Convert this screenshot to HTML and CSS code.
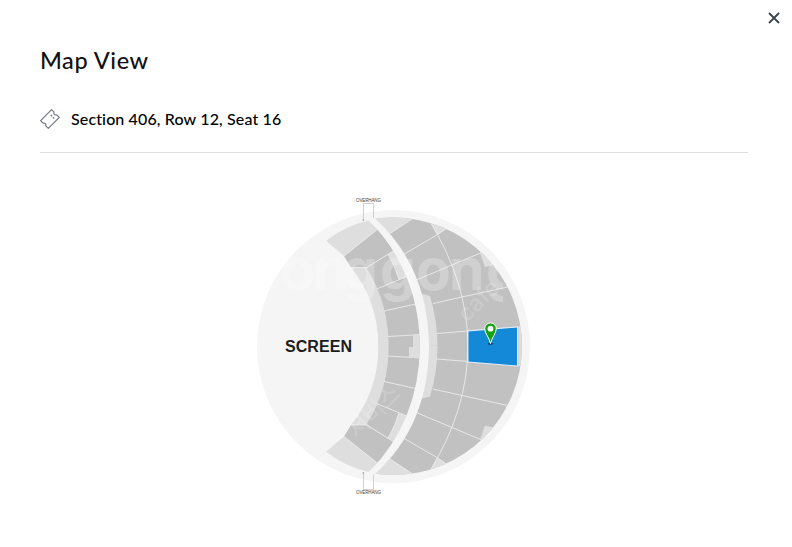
FILE: index.html
```html
<!DOCTYPE html>
<html lang="en">
<head>
  <meta charset="UTF-8">
  <title>Map View</title>
  <link rel="stylesheet" href="styles.css">
</head>
<body>

<div class="modal">
  <button class="close" aria-label="Close">
    <svg width="12" height="12" viewBox="0 0 12 12"><path d="M1 1l10 10M11 1L1 11"/></svg>
  </button>

  <h1>Map View</h1>

  <div class="seat-info">
    <svg class="ticket" width="20" height="20" viewBox="0 0 20 20">
      <path d="M11.500.7L14 3.200c-.7 1.700.9 3.300 2.600 2.600L19.300 8.300 8.300 19.300 5.700 16.800c.8-1.700-.9-3.400-2.600-2.600L.7 11.600z"/>
      <path d="M10.700 5.900l1.400 1.400M12.900 8.100l1.400 1.400"/>
    </svg>
    <span>Section 406, Row 12, Seat 16</span>
  </div>

  <div class="map">
    <svg width="290" height="310" viewBox="250 190 290 310">
      <defs>
        <clipPath id="bowl"><circle cx="393" cy="346.500" r="129"/></clipPath>
        <clipPath id="arena"><path d="M257 200H503V340L540 300V500H257z"/></clipPath>

        <!-- upper half of the seating, mirrored for the lower half -->
        <g id="half">
          <path class="light" d="M326 240.700Q345 226 368.500 220.500L380 231 344 256z"/>
          <path class="dark" d="M344 256L376.700 230 387 233 396 250 366.700 268.300 351 267.500z"/>
          <path class="light" d="M351 267.500H366.700Q388.500 303 388.500 347H378.300Q378.500 301 351 267.500z"/>
          <path class="dark" d="M366.700 268.300L394 250.500Q423 295 423 347H388.500Q388.500 303 366.700 268.300z"/>
          <path class="light" d="M388 254.300L394 250.500Q402 263 408 276L399 279.500Q395 266 388 254.300z"/>
          <path class="line" d="M344 256L376.700 230M351 267.500H366.700L394 250.500M376.700 289L408 276M384 311L418 303.500M388 336.500L422 334.500M388 254.300Q395 266 399 279.500"/>
          <g clip-path="url(#bowl)">
            <path class="dark" d="M374 217H530V347H427Q425 270 374 219z"/>
            <path class="light" d="M374 215H418L388.500 234.500Q382 226 374 219z"/>
            <path class="light" d="M427 215L437 235 455 223z"/>
            <path class="light" d="M480 253L485 267 498 264 490 245z"/>
            <path class="light" d="M417.500 292.700L430 296Q437.500 320 437.500 347H428Q427 318 417.500 292.700z"/>
            <path class="line" d="M388.500 234.500L412 219M402.500 255L437 235 447 228M414 281L452 265 484 251.500M433 303.500L462 297 510 286.500M437 333.500L468 331 525 326.500M429 220Q468 283 468 347"/>
          </g>
          <path class="aisle" d="M369 220.500Q419 271 420 347V349H429V347Q428.500 267 375 218.500z"/>
        </g>
      </defs>

      <circle class="floor" cx="393.500" cy="346.500" r="136.500"/>
      <use href="#half"/>
      <use href="#half" transform="matrix(1 0 0 -1 0 692.500)"/>
      <path class="light" d="M413 335H419.800V358H409V347H413z"/>

      <path class="picked" d="M468 331L517.500 327V366L468 362z"/>
      <path class="light" d="M518.500 327H520.500Q523 346 520.500 366H518.500z"/>

      <!-- watermark -->
      <g clip-path="url(#arena)">
        <text class="mark" x="280 313 342 380 416 449 486" y="290">onggong</text>
        <text class="mark-small" transform="translate(467 323) rotate(-45)">cafe</text>
        <text class="mark-small" transform="translate(357 440) rotate(-45)" textLength="64">서비스</text>
      </g>

      <text class="screen" x="318.500" y="352" textLength="67">SCREEN</text>

      <path class="bracket" d="M363.500 219V203.500H373.500V218M363.500 474V489.500H373.500V475"/>
      <circle class="dot" cx="363.300" cy="220" r=".8"/>
      <circle class="dot" cx="363.300" cy="473" r=".8"/>
      <text class="overhang" x="368.500" y="202" textLength="25">OVERHANG</text>
      <text class="overhang" x="368.500" y="494" textLength="25">OVERHANG</text>

      <ellipse class="pin-shadow" cx="490.500" cy="343.700" rx="2.800" ry="1.300"/>
      <path class="pin" d="M490.500 343.500C489 337 484.700 333.500 484.700 328.700a5.800 5.800 0 0 1 11.600 0C496.300 333.500 492 337 490.500 343.500z"/>
      <circle class="pin-hole" cx="490.500" cy="328.700" r="2.900"/>
    </svg>
  </div>
</div>

</body>
</html>
```
FILE: styles.css
```css
body {
  margin: 0;
  background: #fff;
  color: #121212;
  font-family: Lato, "Noto Sans CJK KR", sans-serif;
}
.modal {
  position: relative;
  box-sizing: border-box;
  height: 547px;
  padding: 45px 44px 0 40px;
  overflow: hidden;
}
.close {
  position: absolute;
  top: 12px;
  right: 12px;
  width: 12px;
  height: 12px;
  padding: 0;
  border: 0;
  background: none;
}
.close svg {
  display: block;
  fill: none;
  stroke: #3c434d;
  stroke-width: 1.8;
}
h1 {
  margin: 0;
  font-size: 23.5px;
  font-weight: 500;
  line-height: 30px;
  letter-spacing: 0.55px;
}
.seat-info {
  display: flex;
  align-items: center;
  gap: 11px;
  height: 66px;
  margin-top: 11px;
  border-bottom: 1px solid #dedede;
  color: #000;
  font-size: 16px;
  font-weight: 500;
  letter-spacing: 0.13px;
}
.seat-info span {
  padding-bottom: 2px;
}
.ticket {
  fill: none;
  stroke: #69727d;
  stroke-width: 1.1;
}
.map {
  margin: 37px 0 0 210px;
}
.map svg {
  display: block;
}
.floor,
.aisle {
  fill: #f5f5f5;
}
.light {
  fill: #dedede;
}
.dark {
  fill: #c1c1c1;
}
.line {
  fill: none;
  stroke: #f1f1f1;
  stroke-width: 0.8;
}
.picked {
  fill: #1389d8;
  stroke: #fff;
  stroke-width: 0.8;
}
.screen {
  fill: #1c1c1c;
  font: bold 16px "Liberation Sans", sans-serif;
  text-anchor: middle;
}
.overhang {
  fill: #444;
  font: 4.500px "Liberation Sans", sans-serif;
  text-anchor: middle;
}
.bracket {
  fill: none;
  stroke: #c4c4c4;
  stroke-width: 0.8;
}
.dot {
  fill: #888;
}
.mark {
  fill: #fff;
  fill-opacity: 0.25;
  font: bold 57px Inter, sans-serif;
}
.mark-small {
  fill: #fff;
  fill-opacity: 0.18;
  font: 500 23px Inter, "Noto Sans CJK KR", sans-serif;
}
.pin {
  fill: #12a312;
  stroke: #fff;
  stroke-width: 1;
}
.pin-hole {
  fill: #fff;
}
.pin-shadow {
  fill: #0b4f84;
}
```
